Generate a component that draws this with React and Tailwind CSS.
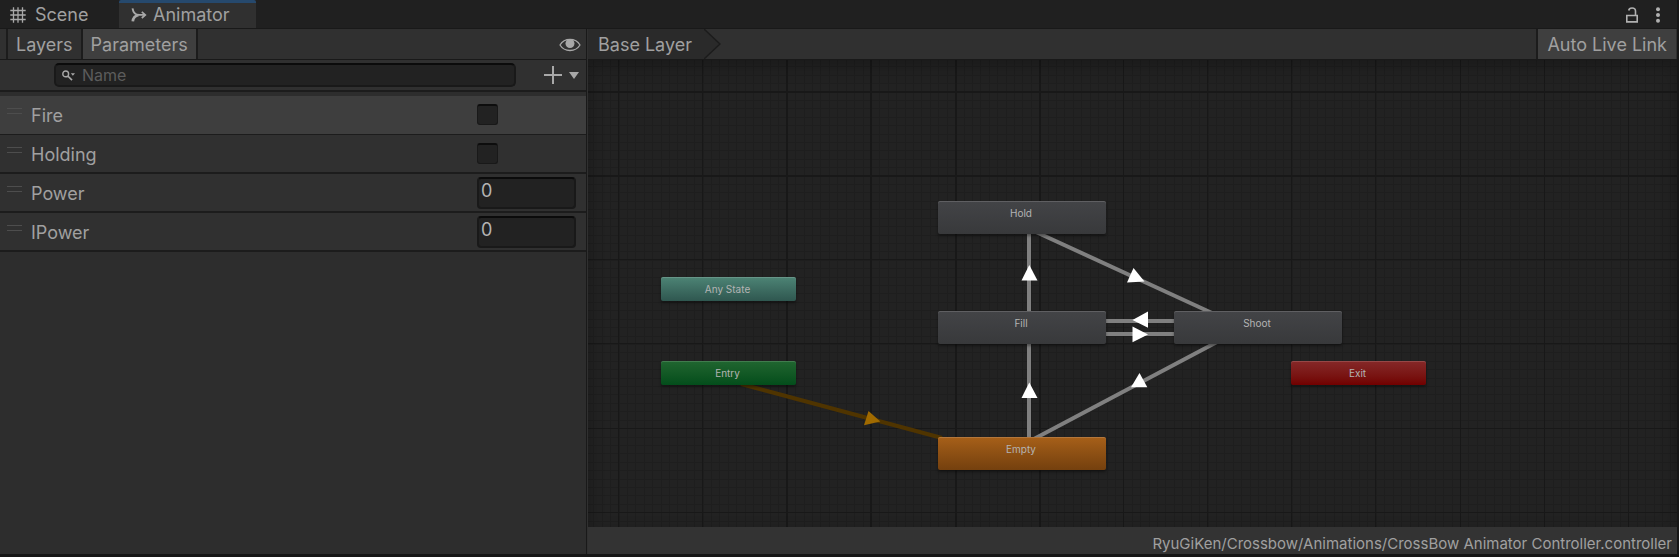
import React from "react";

const GRID = 84.15;
const GRID_X = 30.5;
const GRID_Y = 31.5;
const MINOR = GRID / 10;

function range(from, to) {
  return Array.from({ length: to - from + 1 }, (_, i) => from + i);
}

function CanvasGrid() {
  return (
    <svg className="absolute inset-0 h-full w-full" aria-hidden="true" shapeRendering="crispEdges">
      {range(-4, 300).map((i) => (
        <rect key={"v" + i} x={Math.round(GRID_X + i * MINOR)} y="0" width="1" height="100%" fill="#1e1e1e" />
      ))}
      {range(-4, 160).map((i) => (
        <rect key={"h" + i} x="0" y={Math.round(GRID_Y + i * MINOR)} width="100%" height="1" fill="#1e1e1e" />
      ))}
      {range(0, 30).map((i) => (
        <rect key={"V" + i} x={Math.floor(GRID_X + i * GRID)} y="0" width={i > 1 && i < 6 ? 2 : 1} height="100%" fill="#181818" />
      ))}
      {range(0, 16).map((i) => (
        <rect key={"H" + i} x="0" y={Math.floor(GRID_Y + i * GRID)} width="100%" height={i < 2 ? 2 : 1} fill="#181818" />
      ))}
    </svg>
  );
}

function Transitions() {
  return (
    <svg className="absolute left-0 top-0 h-full w-full overflow-visible" aria-hidden="true">
      <g stroke="#808080" strokeWidth="4">
        <path d="M441 174V251" />
        <path d="M441 284V377" />
        <path d="M448 172L624 253" />
        <path d="M518 261H586" />
        <path d="M518 274H586" />
        <path d="M629 282L444 380" />
      </g>
      <path d="M153 324L354 378" stroke="#4f3400" strokeWidth="4" />
      <g fill="#fff">
        <path d="M441.300 205L449.500 220.500H433.500Z" />
        <path d="M441.300 322.500L449.500 338H433.500Z" />
        <path d="M545.500 208L556.500 221.500L539 222.500Z" />
        <path d="M544.500 260L560 251.500V267.700Z" />
        <path d="M560 274.500L544.500 266.500V282.300Z" />
        <path d="M551.500 313L559.300 327.200H543Z" />
      </g>
      <path d="M280.500 351L292.300 361.500L276 365.200Z" fill="#a06a00" />
    </svg>
  );
}

const states = [
  { name: "Hold", cls: "left-[350px] top-[141px] h-[33px] w-[168px] from-[#434447] to-[#38393b]" },
  { name: "Fill", cls: "left-[350px] top-[251px] h-[33px] w-[168px] from-[#434447] to-[#38393b]" },
  { name: "Shoot", cls: "left-[586px] top-[251px] h-[33px] w-[168px] from-[#434447] to-[#38393b]" },
  { name: "Empty", cls: "left-[350px] top-[377px] h-[33px] w-[168px] from-[#a76019] to-[#74400e]" },
  { name: "Any State", cls: "left-[73px] top-[217px] h-6 w-[135px] from-[#4d8475] to-[#2f5750]" },
  { name: "Entry", cls: "left-[73px] top-[301px] h-6 w-[135px] from-[#206630] to-[#034d1b]" },
  { name: "Exit", cls: "left-[703px] top-[301px] h-6 w-[135px] from-[#852828] to-[#710000]" },
];

function StateNode({ name, cls }) {
  return (
    <div
      className={
        "absolute flex justify-center rounded-xs bg-linear-to-b pr-[2px] text-[10px] leading-6 text-[#b4b4b4] shadow-[0_2px_3px_rgba(0,0,0,0.4),inset_0_1px_0_rgba(255,255,255,0.15)] " +
        cls
      }
    >
      {name}
    </div>
  );
}

function HashIcon() {
  return (
    <svg width="16" height="16" viewBox="0 0 16 16" fill="none" stroke="#a8a8a8" strokeWidth="1.300" aria-hidden="true">
      <path d="M3.500 .3V15.700M8 .3V15.700M12.500 .3V15.700M.3 3.500H15.700M.3 8H15.700M.3 12.500H15.700" />
    </svg>
  );
}

function AnimatorIcon() {
  return (
    <svg width="16" height="14" viewBox="0 0 16 14" fill="none" stroke="#a8a8a8" aria-hidden="true">
      <path d="M1.500 .3C2.200 4.300 4.300 6.800 8 6.900H13.500" strokeWidth="1.900" />
      <path d="M1.800 13.400C2.100 10.300 4 7.800 7.500 7" strokeWidth="2.700" />
      <path d="M10.800 3.800L14.300 6.900L10.800 10" strokeWidth="1.700" />
    </svg>
  );
}

function TabBar() {
  return (
    <header className="flex h-[29px] shrink-0 items-stretch border-b border-[#191919] bg-[#202020] pr-[15px]">
      <nav className="flex" aria-label="Windows">
        <button type="button" className="flex w-[119px] items-center gap-[9px] pl-[10px] pt-[2px]">
          <HashIcon />
          Scene
        </button>
        <button type="button" className="flex w-[137px] items-center gap-[6px] rounded-t-xs border-t-3 border-[#26496d] bg-[#303030] pb-px pl-3">
          <AnimatorIcon />
          Animator
        </button>
      </nav>
      <div className="ml-auto flex items-center gap-4 pt-px">
        <button type="button" aria-label="Unlock">
          <svg width="12" height="16" viewBox="0 0 12 16" fill="none" stroke="#b0b0b0" strokeWidth="1.600" aria-hidden="true">
            <path d="M.8 8.500H11.200V14.900H.8Z" />
            <path d="M2.700 3.500C3 1.700 4.300 1 6 1C8.300 1 9.500 2 9.500 4V8" />
          </svg>
        </button>
        <button type="button" aria-label="Menu">
          <svg width="8" height="16" viewBox="0 0 8 16" fill="#b0b0b0" aria-hidden="true">
            <circle cx="4" cy="2.200" r="2" />
            <circle cx="4" cy="8" r="2" />
            <circle cx="4" cy="13.800" r="2" />
          </svg>
        </button>
      </div>
    </header>
  );
}

function ParameterRow({ name, type, selected }) {
  const id = "param-" + name;
  return (
    <li
      className={
        "flex h-[39px] items-center border-[#1c1c1c] pl-[7px] pr-[10px] " +
        (selected ? "border-b bg-[#3e3e3e]" : "border-b-2 bg-[#303030]")
      }
    >
      <span className="mb-2 mr-[9px] h-[6px] w-[15px] border-y border-[#4d4d4d]" />
      <label htmlFor={id} className="flex-1 pt-[2px]">
        {name}
      </label>
      <span className="flex w-[99px]">
        {type === "bool" ? (
          <input
            id={id}
            type="checkbox"
            className="mb-px h-[21px] w-[21px] appearance-none rounded-[3px] border border-t-2 border-[#191919] border-t-[#0d0d0d] bg-[#222]"
          />
        ) : (
          <input
            id={id}
            type="text"
            defaultValue="0"
            className="h-8 w-full rounded-[4px] border-2 border-[#191919] border-t-[#0b0b0b] bg-[#222] pb-1 pl-[2px] text-[#b4b4b4] outline-none"
          />
        )}
      </span>
    </li>
  );
}

function Sidebar() {
  return (
    <aside className="flex w-[587px] shrink-0 flex-col border-r border-[#191919] bg-[#2d2d2d]">
      <div className="flex h-[31px] items-stretch border-b border-[#191919] bg-[#303030] pl-[6px] pr-[5px]">
        <button type="button" className="border-x-2 border-[#1c1c1c] px-2 pt-[2px]">
          Layers
        </button>
        <button type="button" className="border-r-2 border-[#1c1c1c] bg-[#3f3f3f] px-2 pt-[2px]">
          Parameters
        </button>
        <button type="button" aria-label="Toggle visibility" className="ml-auto pt-px">
          <svg width="22" height="14" viewBox="0 0 22 14" aria-hidden="true">
            <path d="M1 7C5.500-.5 16.500-.5 21 7C16.500 14.300 5.500 14.300 1 7Z" fill="none" stroke="#a8a8a8" strokeWidth="1.300" />
            <circle cx="11" cy="5.500" r="4.500" fill="#a8a8a8" />
          </svg>
        </button>
      </div>
      <div className="flex h-8 items-center border-b-2 border-[#1c1c1c] bg-[#303030] pl-[54px] pr-[5px]">
        <div className="flex h-6 flex-1 items-center gap-[7px] rounded-[5px] border-2 border-[#191919] border-t-[#0b0b0b] bg-[#222] pl-[6px]">
          <svg width="13" height="11" viewBox="0 0 13 11" fill="none" stroke="#a8a8a8" aria-hidden="true">
            <circle cx="3.700" cy="3.900" r="2.900" strokeWidth="1.400" />
            <path d="M5.800 6L10 10.200" strokeWidth="1.700" />
            <path d="M8.800 3.300H13L10.900 5.800Z" fill="#a8a8a8" stroke="none" />
          </svg>
          <input
            type="text"
            placeholder="Name"
            aria-label="Name"
            className="min-w-0 flex-1 bg-transparent text-base leading-5 text-[#b4b4b4] outline-none placeholder:text-[#5c5c5c]"
          />
        </div>
        <button type="button" aria-label="Add parameter" className="ml-7 flex w-[37px] items-center gap-[7px]">
          <svg width="18" height="18" viewBox="0 0 18 18" stroke="#a8a8a8" strokeWidth="2" aria-hidden="true">
            <path d="M9 0V18M0 9H18" />
          </svg>
          <svg width="10" height="7" viewBox="0 0 10 7" fill="#a8a8a8" aria-hidden="true">
            <path d="M0 0H10L5 7Z" />
          </svg>
        </button>
      </div>
      <ul className="pt-1">
        <ParameterRow name="Fire" type="bool" selected />
        <ParameterRow name="Holding" type="bool" />
        <ParameterRow name="Power" type="number" />
        <ParameterRow name="IPower" type="number" />
      </ul>
    </aside>
  );
}

function GraphView() {
  return (
    <main className="flex min-w-0 flex-1 flex-col border-l border-[#303030]">
      <div className="flex h-[31px] shrink-0 items-stretch border-b border-[#191919] bg-[#303030] pr-px">
        <button type="button" className="bg-[#2a2a2a] pl-[10px] pr-3 pt-[2px]">
          Base Layer
        </button>
        <svg width="17" height="30" viewBox="0 0 17 30" aria-hidden="true">
          <path d="M0 0L16 15L0 30Z" fill="#2a2a2a" />
          <path d="M0 0L16 15L0 30" fill="none" stroke="#1c1c1c" strokeWidth="1.500" />
        </svg>
        <button type="button" className="ml-auto border-l-2 border-[#1c1c1c] bg-[#3f3f3f] px-[9px] pt-[2px]">
          Auto Live Link
        </button>
      </div>
      <div className="relative flex-1 overflow-hidden bg-[#222]">
        <CanvasGrid />
        <div className="absolute inset-0 shadow-[inset_0_6px_16px_rgba(0,0,0,0.25)]" />
        <Transitions />
        {states.map((s) => (
          <StateNode key={s.name} {...s} />
        ))}
      </div>
      <footer className="flex h-[27px] shrink-0 items-center justify-end bg-[#333] pr-[5px] pt-[7px] text-[15px]">
        RyuGiKen/Crossbow/Animations/CrossBow Animator Controller.controller
      </footer>
    </main>
  );
}

export default function App() {
  return (
    <div className="flex min-h-screen flex-col border-b-3 border-r-2 border-[#161616] bg-[#202020] font-['Inter','Liberation_Sans',sans-serif] text-lg leading-6 text-[#a0a0a0]">
      <TabBar />
      <div className="flex flex-1 items-stretch">
        <Sidebar />
        <GraphView />
      </div>
    </div>
  );
}
